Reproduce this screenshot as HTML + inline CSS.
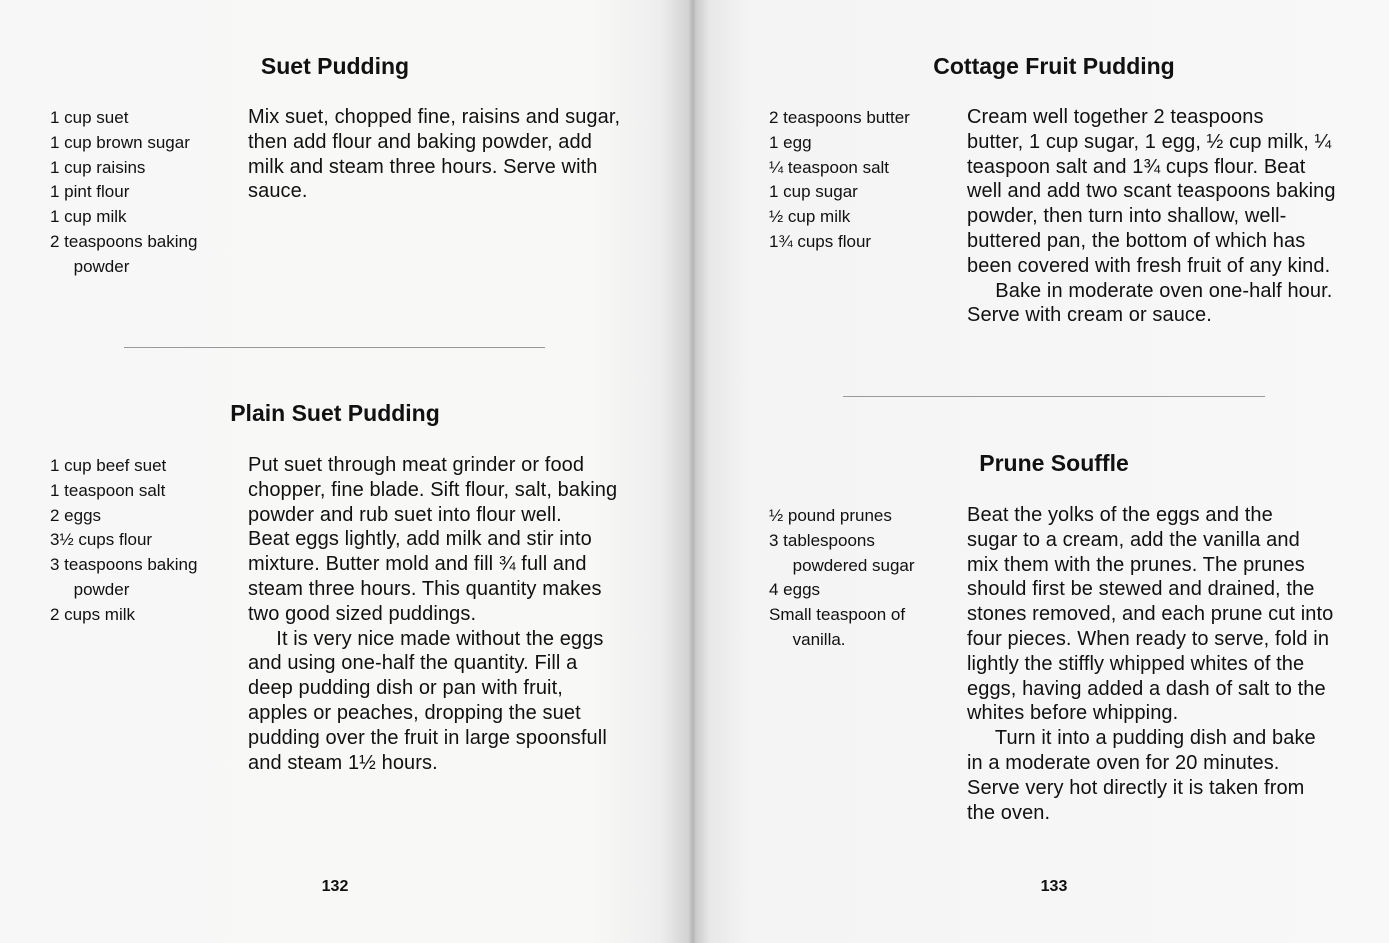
<!DOCTYPE html>
<html><head><style>
body{margin:0;width:1389px;height:943px;overflow:hidden;font-family:"Liberation Sans",sans-serif;color:#111;position:relative;
background:linear-gradient(to right,#f7f7f7 0,#f8f8f7 590px,#eeeeee 660px,#d3d3d3 688px,#b5b5b5 693px,#cbcbcb 696px,#e8e8e8 710px,#f4f4f4 750px,#f8f8f8 1389px);}
.t{position:absolute;font-weight:bold;font-size:23px;text-align:center;width:500px;line-height:30px}
.ing{position:absolute;font-size:17px;line-height:24.8px;white-space:pre}
.txt{position:absolute;font-size:20px;line-height:24.8px;white-space:pre;letter-spacing:0.1px}
.r{position:absolute;height:1px;background:#999}
.pn{position:absolute;font-weight:bold;font-size:16px;width:100px;text-align:center;line-height:20px}
</style></head><body>
<div class="t" style="left:85px;top:51px">Suet Pudding</div>
<div class="ing" style="left:50px;top:106px">1 cup suet
1 cup brown sugar
1 cup raisins
1 pint flour
1 cup milk
2 teaspoons baking
     powder</div>
<div class="txt" style="left:248px;top:105px">Mix suet, chopped fine, raisins and sugar,
then add flour and baking powder, add
milk and steam three hours. Serve with
sauce.</div>
<div class="r" style="left:124px;width:421px;top:347px"></div>
<div class="t" style="left:85px;top:398px">Plain Suet Pudding</div>
<div class="ing" style="left:50px;top:454px">1 cup beef suet
1 teaspoon salt
2 eggs
3½ cups flour
3 teaspoons baking
     powder
2 cups milk</div>
<div class="txt" style="left:248px;top:453px">Put suet through meat grinder or food
chopper, fine blade. Sift flour, salt, baking
powder and rub suet into flour well.
Beat eggs lightly, add milk and stir into
mixture. Butter mold and fill ¾ full and
steam three hours. This quantity makes
two good sized puddings.
     It is very nice made without the eggs
and using one-half the quantity. Fill a
deep pudding dish or pan with fruit,
apples or peaches, dropping the suet
pudding over the fruit in large spoonsfull
and steam 1½ hours.</div>
<div class="pn" style="left:285px;top:877px">132</div>

<div class="t" style="left:804px;top:51px">Cottage Fruit Pudding</div>
<div class="ing" style="left:769px;top:106px">2 teaspoons butter
1 egg
¼ teaspoon salt
1 cup sugar
½ cup milk
1¾ cups flour</div>
<div class="txt" style="left:967px;top:105px">Cream well together 2 teaspoons
butter, 1 cup sugar, 1 egg, ½ cup milk, ¼
teaspoon salt and 1¾ cups flour. Beat
well and add two scant teaspoons baking
powder, then turn into shallow, well-
buttered pan, the bottom of which has
been covered with fresh fruit of any kind.
     Bake in moderate oven one-half hour.
Serve with cream or sauce.</div>
<div class="r" style="left:843px;width:422px;top:396px"></div>
<div class="t" style="left:804px;top:448px">Prune Souffle</div>
<div class="ing" style="left:769px;top:504px">½ pound prunes
3 tablespoons
     powdered sugar
4 eggs
Small teaspoon of
     vanilla.</div>
<div class="txt" style="left:967px;top:503px">Beat the yolks of the eggs and the
sugar to a cream, add the vanilla and
mix them with the prunes. The prunes
should first be stewed and drained, the
stones removed, and each prune cut into
four pieces. When ready to serve, fold in
lightly the stiffly whipped whites of the
eggs, having added a dash of salt to the
whites before whipping.
     Turn it into a pudding dish and bake
in a moderate oven for 20 minutes.
Serve very hot directly it is taken from
the oven.</div>
<div class="pn" style="left:1004px;top:877px">133</div>
</body></html>
